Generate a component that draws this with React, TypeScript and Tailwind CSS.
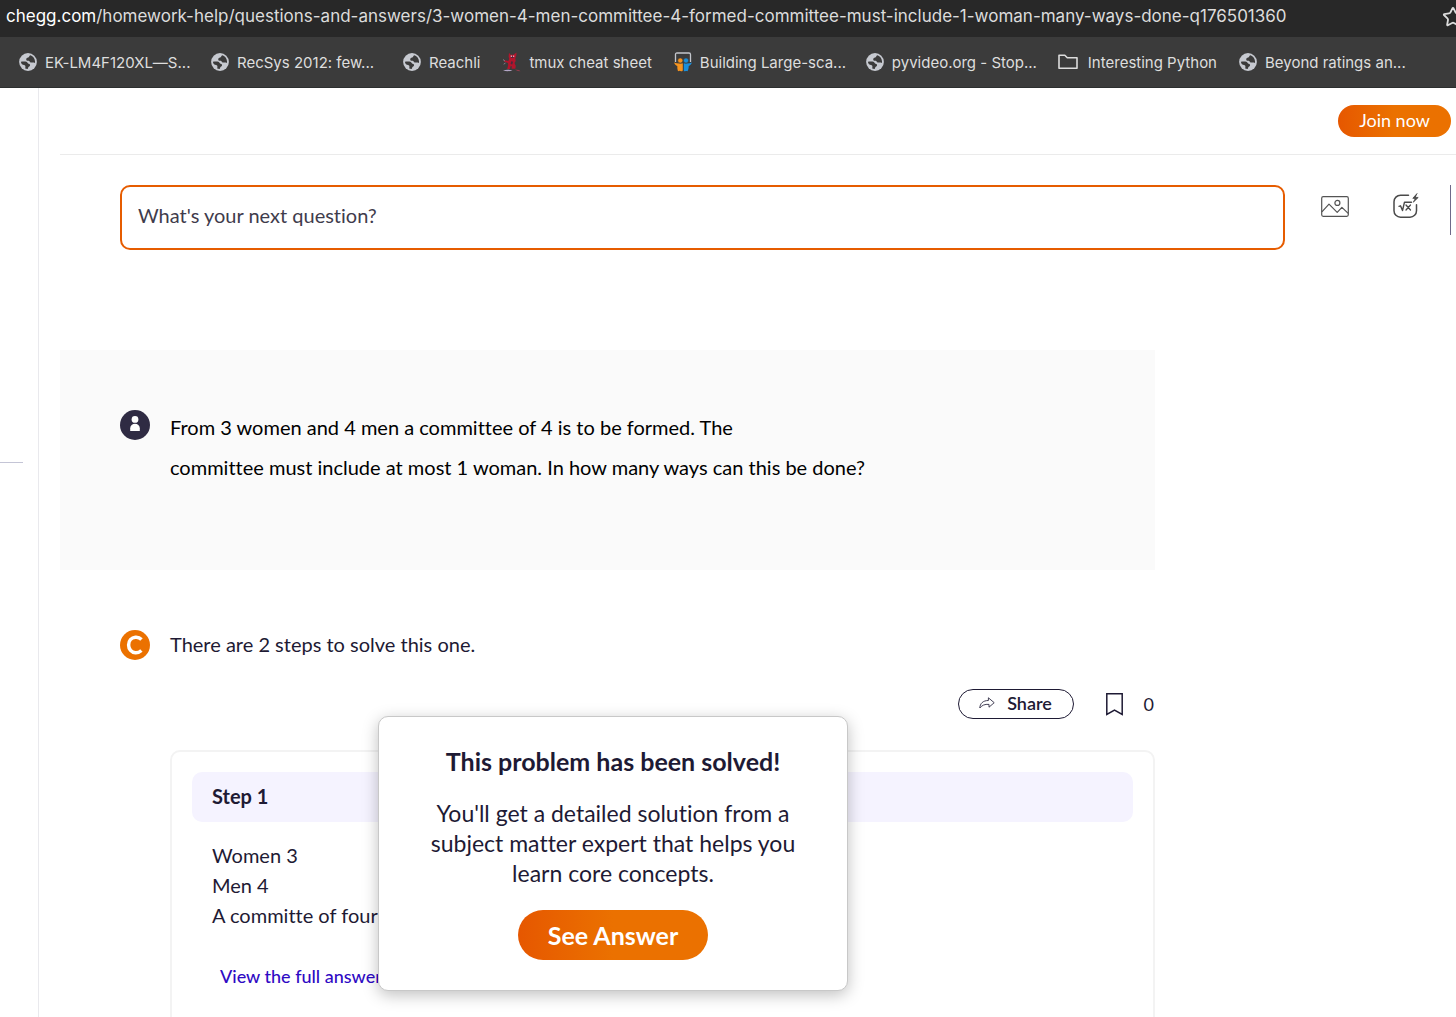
import type { ReactNode } from "react";
import { Star } from "lucide-react";
import clsx from "clsx";

interface Bookmark {
    label: string;
    icon: "globe" | "tmux" | "slides" | "folder";
    clipped?: boolean;
}

const bookmarks: Bookmark[] = [
    { label: "EK-LM4F120XL—S...", icon: "globe", clipped: true },
    { label: "RecSys 2012: few...", icon: "globe", clipped: true },
    { label: "Reachli", icon: "globe" },
    { label: "tmux cheat sheet", icon: "tmux" },
    { label: "Building Large-sca...", icon: "slides", clipped: true },
    { label: "pyvideo.org - Stop...", icon: "globe", clipped: true },
    { label: "Interesting Python", icon: "folder" },
    { label: "Beyond ratings an...", icon: "globe", clipped: true },
];

function GlobeIcon() {
    return (
        <svg width="18" height="18" viewBox="0 0 18 18" aria-hidden="true">
            <circle cx="9" cy="9" r="8.900" fill="#c6c9d0" />
            <path
                d="M11.300 2.300C10 3 10.400 4.200 9.300 4.500 7.900 4.800 6.900 5.600 7.300 6.900c.3.900 1.500.7 2.400.9.900.2.900 1.400 1.900 1.600 1.300.3 3.200-.2 4.400.6.300-2.500-.5-5-2.400-6.500-.7-.6-1.500-1-2.300-1.200z"
                fill="#3b3b3b"
            />
            <path
                d="M1.900 8.700c1.900-.3 4.200-.4 5.500.1 1.200.5 1 1.600 2.100 1.900 1 .3 1.800.7 1.500 1.700-.3 1.100-1.500 1-1.800 2-.2.700-.2 1.300-.8 1.700-.8-.1-1.500-.3-2.200-.6.300-1.300.5-2.600-.5-3.200-1-.5-2.300-.3-2.900-1.300-.4-.7-.9-1.400-.9-2.300z"
                fill="#3b3b3b"
            />
        </svg>
    );
}

function TmuxIcon() {
    return (
        <svg width="19" height="20" viewBox="0 0 19 20" aria-hidden="true">
            <path d="M1 18.500c3-1.200 7-1 9.500.1-3 .9-7 .8-9.500-.1z" fill="#b3a6c6" />
            <path d="M13 17.500l4 .4 1.500 1.400-3-.2z" fill="#8d3b4b" />
            <path
                d="M7 .8l1.600 2h2.800L14.500.5l-.2 3.200-1 2.500.4 2.800-1.200 2 1.300 3-.5 2.800H9.600l.2-2.500-1.100-.4-.8 3H5.200l1-3.800-.2-2.200L2 9.600l.4-1.300 4 .7.8-2.200-.6-2z"
                fill="#b3152c"
            />
            <path d="M8.800 4.500h3l-.5 1.600H9zM9.200 9.300l1.900.5-.9 2.700-1.600-.4z" fill="#4b2940" />
            <path d="M8.800 3.500h1v1.400h-1zM11.200 3.500h1v1.400h-1z" fill="#e6c8d4" />
            <path d="M1 7.500l2 1.600M3.500 11l-1.800 1.200" stroke="#8f8291" strokeWidth=".9" />
        </svg>
    );
}

function SlidesIcon() {
    return (
        <svg width="18" height="20" viewBox="0 0 18 20" aria-hidden="true">
            <path d="M1.500 10V2.500c0-1 .5-1.500 1.500-1.500h12c1 0 1.500.5 1.500 1.500V10" fill="none" stroke="#c3c6cc" strokeWidth="1.300" />
            <path d="M0 10.500c2.500 1 5.500 1.200 8.800.8V18c0 1-.7 1.500-1.700 1.300l-1.600-.6-1.500.5c-.6-1.500-.8-3.200-.7-5.200C1.800 13.400.8 12.300 0 10.500z" fill="#f7941e" />
            <path d="M18 10.500c-2.500 1-5 1.200-8.200.8V18c0 1 .5 1.500 1.400 1.300.6-.4 1.400-.5 2.300-.1.900-1.500 1.200-3.200 1.200-5.200 1.500-.6 2.500-1.700 3.300-3.500z" fill="#1b8fdb" />
            <circle cx="6.300" cy="8.500" r="2.500" fill="#f7941e" stroke="#3b3b3b" strokeWidth=".5" />
            <circle cx="12" cy="8.500" r="2.500" fill="#1b8fdb" stroke="#3b3b3b" strokeWidth=".5" />
        </svg>
    );
}

function FolderIcon() {
    return (
        <svg width="20" height="16" viewBox="0 0 20 16" fill="none" aria-hidden="true">
            <path d="M1 1.200V14.200H19V3.800H9.300L6.800 1.200Z" stroke="#dcdcdc" strokeWidth="1.600" strokeLinejoin="round" />
        </svg>
    );
}

const bookmarkIcons: Record<Bookmark["icon"], ReactNode> = {
    globe: <GlobeIcon />,
    tmux: <TmuxIcon />,
    slides: <SlidesIcon />,
    folder: <FolderIcon />,
};

function ImageIcon() {
    return (
        <svg width="28" height="21" viewBox="0 0 28 21" fill="none" stroke="#545454" strokeWidth="1.200" strokeLinejoin="round" aria-hidden="true">
            <rect x=".7" y=".7" width="26.600" height="19.600" rx="1.500" />
            <circle cx="16.400" cy="6.900" r="2.500" />
            <path d="M.9 15.800L8 8.100l8.200 8.300 4.700-5 6.300 6" />
        </svg>
    );
}

function MathIcon() {
    return (
        <svg width="26" height="26" viewBox="0 0 26 26" fill="none" stroke="#4a4a4a" strokeLinecap="round" strokeLinejoin="round" aria-hidden="true">
            <path d="M15.500 2.200H7.500a6.500 6.500 0 0 0-6.500 6.500v9a6.500 6.500 0 0 0 6.500 6.500h9.500a6.500 6.500 0 0 0 6.500-6.500v-6" strokeWidth="1.500" />
            <path d="M6 13.300l1.500-.5 2 4.700 2-8.300h7" strokeWidth="1.400" />
            <path d="M13 12l4.500 5M17.500 12L13 17" strokeWidth="1.300" />
            <path d="M23.800.8l-4 4.500 2.500.3-2 3.600 4.900-4.700-2.700-.3z" fill="#4a4a4a" strokeWidth=".8" />
        </svg>
    );
}

function StudentIcon() {
    return (
        <svg className="shrink-0" width="30" height="30" viewBox="0 0 30 30" aria-hidden="true">
            <circle cx="15" cy="15" r="15" fill="#2f2b43" />
            <circle cx="15" cy="9.400" r="3.400" fill="#fff" />
            <path d="M10.200 21v-2.800a4.800 4.500 0 0 1 9.600 0V21z" fill="#fff" />
        </svg>
    );
}

function CheggIcon() {
    return (
        <svg className="shrink-0" width="30" height="30" viewBox="0 0 30 30" aria-hidden="true">
            <circle cx="15" cy="15" r="15" fill="#eb7100" />
            <path d="M21.500 9.400C19.700 7.600 17.500 7 15.400 7.200 11.400 7.500 8.600 10.800 8.600 15s2.900 7.600 6.900 7.800c2.100.1 4-.6 5.900-2.300" fill="none" stroke="#fff" strokeWidth="3.500" />
        </svg>
    );
}

function ShareIcon() {
    return (
        <svg width="16" height="12" viewBox="0 0 16 12" fill="none" stroke="#2f2b43" strokeWidth=".9" strokeLinejoin="round" aria-hidden="true">
            <path d="M.8 11C1 6.500 4 3.500 9.400 3.500V.8L15.200 5.700 10 10.200V7.400C5.800 7 3 8.200.8 11z" />
        </svg>
    );
}

function BookmarkIcon() {
    return (
        <svg width="17" height="23" viewBox="0 0 17 23" fill="none" stroke="#1e1a34" strokeWidth="1.500" aria-hidden="true">
            <path d="M.8.8H16.200V21.500L8.500 17.200.8 21.500z" />
        </svg>
    );
}

function BrowserBar() {
    return (
        <header className="font-[Inter,sans-serif]">
            <div className="flex h-[37px] items-center justify-between overflow-hidden bg-[#282828] pb-1 pl-[6px] text-[17px] whitespace-nowrap text-[#dcdcdc]">
                <p>
                    <span className="text-white">chegg.com</span>
                    /homework-help/questions-and-answers/3-women-4-men-committee-4-formed-committee-must-include-1-woman-many-ways-done-q176501360
                </p>
                <button type="button" aria-label="Bookmark this page" className="-mr-2 shrink-0">
                    <Star size={22} strokeWidth={2} />
                </button>
            </div>
            <nav className="flex h-[51px] items-center gap-[22px] overflow-hidden border-b border-[#2c2f2f] bg-[#3b3b3b] pl-[19px] text-[15px] whitespace-nowrap text-[#dedede]">
                {bookmarks.map((bookmark) => (
                    <a
                        key={bookmark.label}
                        href="#"
                        className={clsx("flex shrink-0 items-center", bookmark.icon === "folder" ? "gap-[10px]" : "gap-2")}
                    >
                        {bookmarkIcons[bookmark.icon]}
                        <span className={clsx(bookmark.clipped && "w-36")}>{bookmark.label}</span>
                    </a>
                ))}
            </nav>
        </header>
    );
}

function SolvedCard() {
    return (
        <div className="absolute -top-9 left-[206px] flex w-[470px] flex-col items-center rounded-[10px] border border-[#c8c8c8] bg-white px-12 pt-[29px] pb-[30px] text-center shadow-[0_4px_16px_rgba(0,0,0,0.25)]">
            <h2 className="text-[25px] leading-[30px] font-bold">This problem has been solved!</h2>
            <p className="mt-[22px] text-[23px] leading-[30px]">
                You'll get a detailed solution from a subject matter expert that helps you learn core concepts.
            </p>
            <button
                type="button"
                className="mt-[22px] h-[50px] w-[190px] rounded-full bg-linear-to-r from-[#e65700] to-[#eb7100] to-50% text-[25px] font-bold text-white"
            >
                See Answer
            </button>
        </div>
    );
}

export default function App() {
    return (
        <div className="flex h-screen flex-col overflow-hidden bg-white font-[Lato,sans-serif] text-xl text-[#1e1a34] [font-variant-ligatures:none]">
            <BrowserBar />
            <div className="flex min-h-0 flex-1">
                <aside className="w-[39px] shrink-0 border-r border-[#e9e9ed] pt-[374px] pr-[15px]">
                    <hr className="border-[#c4c5d6]" />
                </aside>
                <main className="min-w-0 flex-1 pl-[21px]">
                    <div className="flex h-[67px] items-center justify-end border-b border-[#ebebeb] pr-[5px]">
                        <button
                            type="button"
                            className="h-8 w-[113px] rounded-full bg-linear-to-r from-[#e65700] to-[#eb7100] to-50% pb-[3px] text-lg leading-none text-white"
                        >
                            Join now
                        </button>
                    </div>

                    <div className="mt-[30px] flex items-start pr-[5px] pl-[60px]">
                        <input
                            type="text"
                            aria-label="What's your next question?"
                            placeholder="What's your next question?"
                            className="h-[65px] min-w-0 flex-1 rounded-[10px] border-2 border-[#e65c00] px-4 pb-[5px] text-xl text-[#3a3749] outline-none placeholder:text-[#3f3c4c]"
                        />
                        <button type="button" aria-label="Upload an image" className="mt-[11px] ml-9">
                            <ImageIcon />
                        </button>
                        <button type="button" aria-label="Insert an equation" className="mt-2 ml-11">
                            <MathIcon />
                        </button>
                        <div className="ml-[31px] h-[50px] w-px bg-[#6e6a8a]" />
                    </div>

                    <div className="max-w-[1095px]">
                        <section className="mt-[100px] flex h-[220px] gap-5 bg-[#fafafa] px-[60px] pt-[60px]">
                            <StudentIcon />
                            <p className="-mt-[3px] leading-10 text-black">
                                From 3 women and 4 men a committee of 4 is to be formed. The
                                <br />
                                committee must include at most 1 woman. In how many ways can this be done?
                            </p>
                        </section>

                        <section className="pt-[60px] pl-[60px]">
                            <div className="flex h-[30px] items-start gap-5">
                                <CheggIcon />
                                <p>There are 2 steps to solve this one.</p>
                            </div>
                            <div className="mt-[29px] flex h-[30px] items-center justify-end">
                                <button
                                    type="button"
                                    className="flex h-[30px] w-[116px] items-center justify-center gap-3 rounded-full border border-[#1e1a34] pb-[3px] text-lg leading-none font-semibold"
                                >
                                    <ShareIcon />
                                    Share
                                </button>
                                <button type="button" aria-label="Save" className="ml-8">
                                    <BookmarkIcon />
                                </button>
                                <span className="ml-[21px] pr-px pb-px text-lg">0</span>
                            </div>

                            <article className="relative mt-[31px] ml-[50px] h-[300px] rounded-[10px] border-2 border-[#f3f3f3] p-5">
                                <h3 className="rounded-[10px] bg-[#f5f3ff] px-5 pb-[2px] leading-[48px] font-bold">Step 1</h3>
                                <div className="mt-[18px] pl-5 leading-[30px]">
                                    <p>Women 3</p>
                                    <p>Men 4</p>
                                    <p>A committe of four</p>
                                </div>
                                <a href="#" className="mt-8 ml-7 inline-block text-lg font-medium text-[#2f0ac4]">
                                    View the full answer
                                </a>
                                <SolvedCard />
                            </article>
                        </section>
                    </div>
                </main>
            </div>
        </div>
    );
}
